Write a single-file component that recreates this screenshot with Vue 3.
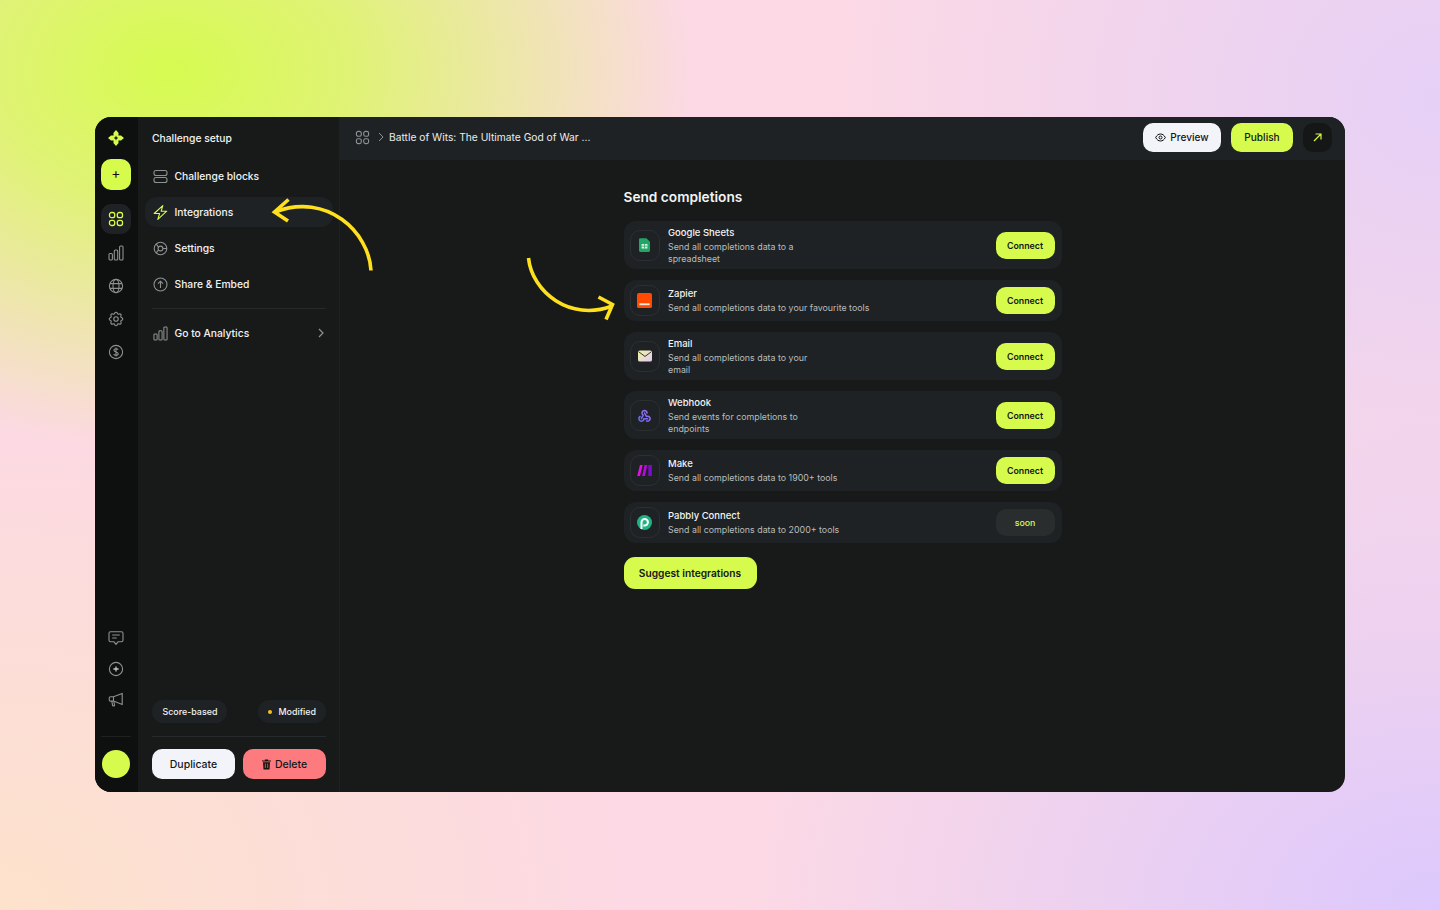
<template>
  <div class="page">
    <div class="window">
      <nav class="rail">
        <svg class="logo" width="18" height="18" viewBox="0 0 18 18">
          <path d="M9 1 11.600 4 11.400 6.600 14 6.400 17 9 14 11.600 11.400 11.400 11.600 14 9 17 6.400 14 6.600 11.400 4 11.600 1 9 4 6.400 6.600 6.600 6.400 4Z" fill="#d7fb4c" />
          <path d="M9 6.600 9.700 8.300 11.400 9 9.700 9.700 9 11.400 8.300 9.700 6.600 9 8.300 8.300Z" fill="#0e100f" />
        </svg>
        <button class="plus">+</button>
        <div class="rail-icons">
          <div class="rail-icon active">
            <svg width="16" height="16" viewBox="0 0 16 16" fill="none" stroke="#d7fb4c" stroke-width="1.3">
              <rect x="1.5" y="1.5" width="5.2" height="5.2" rx="2" /><rect x="9.3" y="1.5" width="5.2" height="5.2" rx="2" />
              <rect x="1.5" y="9.3" width="5.2" height="5.2" rx="2" /><rect x="9.3" y="9.3" width="5.2" height="5.2" rx="2" />
            </svg>
          </div>
          <div class="rail-icon">
            <svg width="16" height="16" viewBox="0 0 16 16" fill="none" stroke="#8d9190" stroke-width="1.1">
              <rect x="1" y="8.5" width="3.4" height="6.5" rx="1" /><rect x="6.3" y="5" width="3.4" height="10" rx="1" /><rect x="11.6" y="1" width="3.4" height="14" rx="1" />
            </svg>
          </div>
          <div class="rail-icon">
            <svg width="16" height="16" viewBox="0 0 16 16" fill="none" stroke="#8d9190" stroke-width="1.1">
              <circle cx="8" cy="8" r="6.6" /><ellipse cx="8" cy="8" rx="3" ry="6.6" /><path d="M2 5.6h12M2 10.4h12" />
            </svg>
          </div>
          <div class="rail-icon">
            <svg width="18" height="18" viewBox="0 0 24 24" fill="none" stroke="#8d9190" stroke-width="1.500">
              <path d="M10.325 4.317c.426-1.756 2.924-1.756 3.35 0a1.724 1.724 0 0 0 2.573 1.066c1.543-.94 3.31.826 2.37 2.37a1.724 1.724 0 0 0 1.065 2.572c1.756.426 1.756 2.924 0 3.35a1.724 1.724 0 0 0-1.066 2.573c.94 1.543-.826 3.31-2.37 2.37a1.724 1.724 0 0 0-2.572 1.065c-.426 1.756-2.924 1.756-3.35 0a1.724 1.724 0 0 0-2.573-1.066c-1.543.94-3.31-.826-2.37-2.37a1.724 1.724 0 0 0-1.065-2.572c-1.756-.426-1.756-2.924 0-3.35a1.724 1.724 0 0 0 1.066-2.573c-.94-1.543.826-3.31 2.37-2.37 1 .608 2.296.07 2.572-1.065z" />
              <circle cx="12" cy="12" r="3" />
            </svg>
          </div>
          <div class="rail-icon">
            <svg width="16" height="16" viewBox="0 0 16 16" fill="none" stroke="#8d9190" stroke-width="1.1">
              <circle cx="8" cy="8" r="6.6" />
              <path d="M10.100 5.800C9.800 5 9 4.700 8 4.700c-1.200 0-2.100.6-2.100 1.600 0 2.200 4.300 1.100 4.300 3.400 0 1-1 1.600-2.200 1.600-1.100 0-2-.4-2.300-1.300M8 3.600v8.800" />
            </svg>
          </div>
        </div>
        <div class="rail-bottom">
          <svg width="16" height="16" viewBox="0 0 16 16" fill="none" stroke="#8d9190" stroke-width="1.1">
            <path d="M2.500 1.800h11a1.500 1.500 0 0 1 1.500 1.500v7a1.500 1.500 0 0 1-1.500 1.500H10L8 14.400 6 11.800H2.500A1.500 1.500 0 0 1 1 10.300v-7a1.500 1.500 0 0 1 1.500-1.500Z" />
            <path d="M4.200 5h7.600M4.200 8h4.600" />
          </svg>
          <svg width="16" height="16" viewBox="0 0 16 16" fill="none" stroke="#8d9190" stroke-width="1.1">
            <circle cx="8" cy="8" r="6.600" /><path d="M8 5.400v5.200M5.400 8h5.200" stroke="#c4c6c5" stroke-width="1.300" />
          </svg>
          <svg width="16" height="16" viewBox="0 0 16 16" fill="none" stroke="#8d9190" stroke-width="1.1">
            <path d="M14.200 1.500 5.500 4.800H2.600a1.400 1.400 0 0 0-1.400 1.400v1.500a1.400 1.400 0 0 0 1.400 1.400h2.900l8.700 3.300ZM5.500 4.800v4.100M3.800 9.200l.8 4.400c.1.500 2 .4 2-.2l-.7-3.600" />
          </svg>
        </div>
        <div class="rail-line"></div>
        <div class="avatar"></div>
      </nav>

      <aside class="side">
        <div class="side-title">Challenge setup</div>
        <ul class="menu">
          <li class="menu-item">
            <svg width="15" height="15" viewBox="0 0 15 15" fill="none" stroke="#8d9190" stroke-width="1.1">
              <rect x="1" y="1.500" width="13" height="5" rx="2" /><rect x="1" y="8.500" width="13" height="5" rx="2" />
            </svg>
            Challenge blocks
          </li>
          <li class="menu-item current">
            <svg width="15" height="15" viewBox="0 0 15 15" fill="none" stroke="#d7fb4c" stroke-width="1.1" stroke-linejoin="round">
              <path d="M9.800.6 1.200 8.500h5.400L4.800 14.400l8.900-8.200H8.200Z" />
            </svg>
            Integrations
          </li>
          <li class="menu-item">
            <svg width="15" height="15" viewBox="0 0 15 15" fill="none" stroke="#8d9190" stroke-width="1.1">
              <circle cx="7.500" cy="7.500" r="6.300" /><circle cx="7.500" cy="7.500" r="2.400" />
              <path d="M5.500 6.200 3.200 2.900M9.900 7.500h4M5.500 8.800l-2.300 3.300" />
            </svg>
            Settings
          </li>
          <li class="menu-item">
            <svg width="15" height="15" viewBox="0 0 15 15" fill="none" stroke="#8d9190" stroke-width="1.1">
              <circle cx="7.500" cy="7.500" r="6.500" /><path d="M7.500 11V4.300M5 6.700l2.500-2.500L10 6.700" />
            </svg>
            Share &amp; Embed
          </li>
        </ul>
        <div class="side-line"></div>
        <div class="menu-item analytics">
          <svg width="15" height="15" viewBox="0 0 16 16" fill="none" stroke="#8d9190" stroke-width="1.100">
            <rect x="1" y="8.500" width="3.400" height="6.500" rx="1" /><rect x="6.300" y="5" width="3.400" height="10" rx="1" /><rect x="11.600" y="1" width="3.400" height="14" rx="1" />
          </svg>
          Go to Analytics
          <svg class="chev" width="8" height="10" viewBox="0 0 8 10" fill="none" stroke="#8d9190" stroke-width="1.200"><path d="M2 1l4 4-4 4" /></svg>
        </div>
        <div class="chips">
          <span class="chip">Score-based</span>
          <span class="chip"><i class="dot"></i>Modified</span>
        </div>
        <div class="side-line bottom-line"></div>
        <div class="actions">
          <button class="btn white">Duplicate</button>
          <button class="btn red">
            <svg width="9" height="11" viewBox="0 0 9 11"><path d="M0 1.500h2.800V.5h3.400v1H9v1H0ZM1 3.200h7l-.5 7.300h-6Z" fill="#1a1111" /><path d="M3.300 4.500v4.500M5.700 4.500v4.500" stroke="#fd7b7e" stroke-width=".7" /></svg>
            Delete
          </button>
        </div>
      </aside>

      <div class="main">
        <header class="top">
          <svg width="15" height="15" viewBox="0 0 16 16" fill="none" stroke="#8d9190" stroke-width="1.200">
            <rect x="1.500" y="1.500" width="5.200" height="5.200" rx="2" /><rect x="9.300" y="1.500" width="5.200" height="5.200" rx="2" />
            <rect x="1.500" y="9.300" width="5.200" height="5.200" rx="2" /><rect x="9.300" y="9.300" width="5.200" height="5.200" rx="2" />
          </svg>
          <svg class="crumb" width="8" height="10" viewBox="0 0 8 10" fill="none" stroke="#8d9190" stroke-width="1"><path d="M2 1l4 4-4 4" /></svg>
          <span class="crumb-text">Battle of Wits: The Ultimate God of War ...</span>
          <button class="btn white small preview">
            <svg width="11" height="9" viewBox="0 0 11 9" fill="none" stroke="#111" stroke-width="1"><path d="M.7 4.500C1.800 2.200 3.500 1 5.500 1s3.700 1.200 4.800 3.500C9.200 6.800 7.500 8 5.500 8S1.800 6.800.7 4.500Z" /><circle cx="5.500" cy="4.500" r="1.500" /></svg>
            Preview
          </button>
          <button class="btn lime small publish">Publish</button>
          <button class="open">
            <svg width="9" height="9" viewBox="0 0 9 9" fill="none" stroke="#d7fb4c" stroke-width="1.200"><path d="M1 8 8 1M2.500 1H8v5.500" /></svg>
          </button>
        </header>
        <section class="content">
          <div class="panel">
            <h2>Send completions</h2>
            <div v-for="row in rows" :key="row.name" class="row">
              <div class="logo-box" v-html="row.icon"></div>
              <div class="info">
                <div class="name">{{ row.name }}</div>
                <div class="desc" :class="{ wrap: row.wrap }">{{ row.desc }}</div>
              </div>
              <button class="connect" :class="{ soon: row.soon }">{{ row.soon ? 'soon' : 'Connect' }}</button>
            </div>
            <button class="suggest">Suggest integrations</button>
          </div>
        </section>
      </div>
    </div>

    <svg class="arrows" viewBox="0 0 1440 910" fill="none" stroke="#ffe01e" stroke-width="3.600">
      <path d="M371 270.500C369 232 327 192 275 212" />
      <path d="M288.500 199.500 274.500 212 288 221" />
      <path d="M528.500 258C532 292 570 322 612 306" />
      <path d="M598.500 297 612.500 304.500 606 319.500" />
    </svg>
  </div>
</template>

<script setup>
const rows = [
  {
    name: 'Google Sheets',
    desc: 'Send all completions data to a spreadsheet',
    wrap: true,
    icon: '<svg width="11" height="14" viewBox="0 0 12 15"><path d="M1.500 0H8l4 4v9.500a1.500 1.500 0 0 1-1.500 1.500h-9A1.500 1.500 0 0 1 0 13.500v-12A1.500 1.500 0 0 1 1.500 0Z" fill="#22a565"/><path d="M2.800 6.300h6.400v5H2.800Z" fill="#d9f2e4"/><path d="M5.600 6.300h.8v5h-.8ZM2.800 8.400h6.400v.8H2.800Z" fill="#22a565"/></svg>'
  },
  {
    name: 'Zapier',
    desc: 'Send all completions data to your favourite tools',
    icon: '<svg width="15" height="15" viewBox="0 0 16 16"><rect width="16" height="16" rx="2" fill="#ff4a00"/><rect x="2.500" y="11" width="11" height="2" fill="#fde7dc"/></svg>'
  },
  {
    name: 'Email',
    desc: 'Send all completions data to your email',
    wrap: true,
    icon: '<svg width="14" height="12" viewBox="0 0 15 12"><defs><linearGradient id="m" x1="0" y1="0" x2="1" y2="1"><stop offset="0" stop-color="#eef7a0"/><stop offset="1" stop-color="#e6c8f5"/></linearGradient></defs><rect width="15" height="12" rx="2" fill="url(#m)"/><path d="M.8 1.500 7.500 6.500l6.700-5" fill="none" stroke="#24282a" stroke-width="1"/></svg>'
  },
  {
    name: 'Webhook',
    desc: 'Send events for completions to endpoints',
    wrap: true,
    icon: '<svg width="15" height="15" viewBox="0 0 24 24" fill="none" stroke="url(#w)" stroke-width="2.400" stroke-linecap="round" stroke-linejoin="round"><defs><linearGradient id="w" gradientUnits="userSpaceOnUse" x1="2" y1="22" x2="22" y2="2"><stop offset="0" stop-color="#5a6ff0"/><stop offset="1" stop-color="#b070f0"/></linearGradient></defs><path d="M4.876 13.610a4 4 0 1 0 6.124 3.390h6"/><path d="M15.066 20.502a4 4 0 1 0 1.934-7.502c-.706 0-1.424.179-2 .5l-3-5.500"/><path d="M16 8a4 4 0 1 0-8 0c0 1.506.77 2.818 2 3.500l-3 5.500"/></svg>'
  },
  {
    name: 'Make',
    desc: 'Send all completions data to 1900+ tools',
    icon: '<svg width="15" height="11" viewBox="0 0 16 12"><path d="M3 0h3L3 12H0Z" fill="#e40ee6"/><path d="M8 0h3L8.500 12h-3Z" fill="#b40cd8"/><path d="M12.200 0H16v12h-3.800Z" fill="#7d0bd0"/></svg>'
  },
  {
    name: 'Pabbly Connect',
    desc: 'Send all completions data to 2000+ tools',
    soon: true,
    icon: '<svg width="15" height="15" viewBox="0 0 15 15"><circle cx="7.500" cy="7.500" r="7.500" fill="#1fb382"/><path d="M4.500 14V7.300a3.200 3.200 0 1 1 3.200 3.200H6.300" fill="none" stroke="#fff" stroke-width="2"/></svg>'
  }
]
</script>

<style>
html,
body {
  margin: 0;
}
</style>

<style scoped>
.page {
  position: relative;
  box-sizing: border-box;
  width: 1440px;
  height: 910px;
  padding: 117px 95px 118px;
  font-family: Inter, "Liberation Sans", sans-serif;
  color: #f2f3f3;
  background:
    radial-gradient(520px 380px at 170px 70px, #d6fb50 0%, rgba(214, 251, 80, 0.75) 35%, rgba(214, 251, 80, 0) 100%),
    radial-gradient(700px 500px at 1440px 910px, #dcc8fd 0%, rgba(220, 200, 253, 0) 100%),
    radial-gradient(620px 560px at 1440px 100px, #e6d0f6 0%, rgba(230, 208, 246, 0) 100%),
    radial-gradient(620px 500px at 0 910px, #fde2cb 0%, rgba(253, 226, 203, 0) 100%),
    #fcd9e4;
}

.window {
  display: flex;
  height: 675px;
  border-radius: 16px;
  overflow: hidden;
  background: #181a1a;
}

button {
  font-family: inherit;
  border: 0;
  padding: 0;
}

.rail {
  display: flex;
  flex-direction: column;
  align-items: center;
  width: 43px;
  flex: none;
  background: #0e100f;
  padding: 12px 1px 12px 0;
  box-sizing: border-box;
}

.logo {
  display: block;
}

.plus {
  width: 30px;
  height: 31px;
  margin-top: 12px;
  padding-bottom: 4px;
  border-radius: 10px;
  background: #d7fb4c;
  color: #111;
  font-size: 14px;
}

.rail-icons {
  margin-top: 14px;
  display: flex;
  flex-direction: column;
  gap: 3px;
}

.rail-icon {
  display: flex;
  align-items: center;
  justify-content: center;
  width: 30px;
  height: 30px;
}

.rail-icon.active {
  margin-bottom: 1px;
  background: #1e2224;
  border-radius: 10px;
}

.rail-bottom {
  margin-top: auto;
  display: flex;
  flex-direction: column;
  align-items: center;
  gap: 15px;
}

.rail-line {
  width: 30px;
  height: 1px;
  margin-top: 28px;
  background: #1e2120;
}

.avatar {
  width: 28px;
  height: 28px;
  margin-top: 13px;
  margin-bottom: 2px;
  border-radius: 50%;
  background: #d7fb4c;
}

.side {
  display: flex;
  flex-direction: column;
  box-sizing: border-box;
  width: 202px;
  flex: none;
  padding: 0 13px 13px 14px;
  background: #181a1a;
  border-right: 1px solid #1e2121;
}

.side-title {
  height: 43px;
  line-height: 43px;
  font-size: 10.300px;
  font-weight: 500;
}

.menu {
  list-style: none;
  margin: 1px 0 0 -7px;
  padding: 0;
  display: flex;
  flex-direction: column;
  gap: 6px;
  width: 188px;
}

.menu-item {
  display: flex;
  align-items: center;
  gap: 6.500px;
  height: 30px;
  padding-left: 8px;
  font-size: 10.300px;
  font-weight: 500;
  border-radius: 12px;
}

.menu-item.current {
  background: #1e2224;
}

.side-line {
  height: 1px;
  margin-top: 9px;
  background: #272a2a;
}

.analytics {
  margin-top: 9px;
  padding-left: 1px;
}

.chev {
  margin-left: auto;
  margin-right: 1px;
}

.chips {
  margin-top: auto;
  display: flex;
  justify-content: space-between;
}

.chip {
  display: flex;
  align-items: center;
  gap: 6px;
  height: 23px;
  padding: 0 10px 0 10.500px;
  border-radius: 12px;
  background: #1e2224;
  font-size: 8.900px;
  font-weight: 500;
}

.dot {
  width: 4px;
  height: 4px;
  border-radius: 50%;
  background: #fbc012;
}

.bottom-line {
  margin-top: 13px;
}

.actions {
  display: flex;
  gap: 8px;
  margin-top: 12px;
}

.btn {
  display: flex;
  align-items: center;
  justify-content: center;
  gap: 4px;
  height: 30px;
  width: 83px;
  border-radius: 10px;
  font-size: 10.500px;
  font-weight: 500;
  color: #14171a;
}

.white {
  background: #f3f4f9;
}

.red {
  background: #fd7b7e;
}

.lime {
  background: #d7fb4c;
}

.main {
  flex: 1;
  display: flex;
  flex-direction: column;
  min-width: 0;
}

.top {
  display: flex;
  align-items: center;
  height: 43px;
  flex: none;
  box-sizing: border-box;
  padding: 0 13px 3px 15px;
  background: #1e2224;
}

.crumb {
  margin-left: 7px;
}

.crumb-text {
  margin-left: 4px;
  font-size: 10.250px;
  font-weight: 400;
  color: #eceded;
}

.btn.small {
  height: 29px;
  margin-top: 1px;
  padding-bottom: 1px;
  font-size: 10.100px;
}

.preview {
  margin-left: auto;
  width: 78px;
}

.btn.publish {
  margin-left: 10px;
  width: 62px;
}

.open {
  display: flex;
  align-items: center;
  justify-content: center;
  width: 29px;
  height: 29px;
  margin-top: 1px;
  margin-left: 10px;
  border-radius: 10px;
  background: #151716;
}

.content {
  flex: 1;
  display: flex;
  justify-content: center;
}

.panel {
  width: 438px;
  padding-top: 28px;
}

h2 {
  margin: 0 0 15px;
  font-size: 13.700px;
  line-height: 18px;
  font-weight: 600;
}

.row {
  display: flex;
  align-items: center;
  box-sizing: border-box;
  min-height: 41px;
  margin-bottom: 11px;
  padding: 5px 7px 5px 6px;
  border-radius: 12px;
  background: #1e2224;
}

.logo-box {
  display: flex;
  align-items: center;
  justify-content: center;
  flex: none;
  box-sizing: border-box;
  width: 30px;
  height: 31px;
  border: 1px solid #2b2f31;
  border-radius: 10px;
}

.logo-box :deep(svg) {
  display: block;
}

.info {
  flex: 1;
  margin-left: 8.500px;
}

.name {
  margin-bottom: 2px;
  font-size: 9.500px;
  line-height: 13px;
  font-weight: 500;
}

.desc {
  font-size: 8.850px;
  line-height: 11.500px;
  color: #b9bcbc;
}

.desc.wrap {
  max-width: 142px;
}

.connect {
  flex: none;
  width: 59px;
  height: 27px;
  border-radius: 10px;
  background: #d7fb4c;
  color: #14171a;
  font-size: 8.800px;
  font-weight: 600;
}

.connect.soon {
  background: #2a2d2e;
  color: #d7fb4c;
  font-weight: 500;
}

.suggest {
  display: block;
  margin-top: 14px;
  width: 133px;
  height: 32px;
  border-radius: 11px;
  background: #d7fb4c;
  color: #14171a;
  font-size: 10.200px;
  font-weight: 600;
}

.arrows {
  position: absolute;
  left: 0;
  top: 0;
  width: 1440px;
  height: 910px;
  pointer-events: none;
}
</style>
